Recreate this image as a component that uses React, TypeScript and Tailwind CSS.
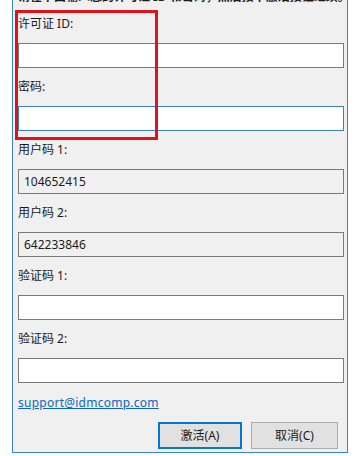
import React from 'react';

const font = { fontFamily: '"Noto Sans", "Noto Sans CJK SC", sans-serif' };

function Field({ label, value, disabled, focused }: { label: string; value?: string; disabled?: boolean; focused?: boolean }) {
    return (
        <div className="flex flex-col">
            <div className="h-[16px] leading-[16px] text-[12px] text-[#1a1a1a]">{label}</div>
            <div
                className={
                    'mt-[11px] mb-[11px] h-[25px] w-[326px] border flex items-center px-[5px] text-[12px] text-[#1a1a1a] ' +
                    (focused ? 'border-[#3b7fc1] bg-white' : disabled ? 'border-[#7a7a7a] bg-[#f0f0f0]' : 'border-[#7a7a7a] bg-white')
                }
            >
                {value}
            </div>
        </div>
    );
}

export default function App() {
    return (
        <div className="relative w-[355px] h-[456px] bg-white overflow-hidden" style={font}>
            <div className="ml-[12px] w-[336px] h-[453px] bg-[#f0f0f0] border-l border-r border-b border-[#3a83c9] overflow-hidden flex flex-col">
                <div className="-mt-[11px] h-[16px] leading-[16px] pl-[5px] text-[12px] font-bold text-[#1a1a1a] whitespace-nowrap">
                    请在下面输入您的许可证 ID 和密码，然后按下激活按钮继续。
                </div>
                <div className="mt-[11px] pl-[5px] flex flex-col">
                    <Field label="许可证 ID:" />
                    <Field label="密码:" focused />
                    <Field label="用户码 1:" value="104652415" disabled />
                    <Field label="用户码 2:" value="642233846" disabled />
                    <Field label="验证码 1:" />
                    <Field label="验证码 2:" />
                    <div className="mt-[1px] h-[16px] leading-[16px] text-[12px]">
                        <span className="text-[#0a66c2] underline tracking-[0.25px]">support@idmcomp.com</span>
                    </div>
                </div>
                <div className="mt-[11px] flex justify-end gap-[9px] pr-[9px]">
                    <div className="w-[84px] h-[27px] border-2 border-[#0078d7] bg-[#e1e1e1] flex items-center justify-center text-[12px] text-[#1a1a1a]">
                        激活(A)
                    </div>
                    <div className="w-[87px] h-[27px] border border-[#adadad] bg-[#e1e1e1] flex items-center justify-center text-[12px] text-[#1a1a1a]">
                        取消(C)
                    </div>
                </div>
            </div>
            <div className="absolute left-[15px] top-[10px] w-[143px] h-[130px] border-[3px] border-[#e3121a]" />
        </div>
    );
}
